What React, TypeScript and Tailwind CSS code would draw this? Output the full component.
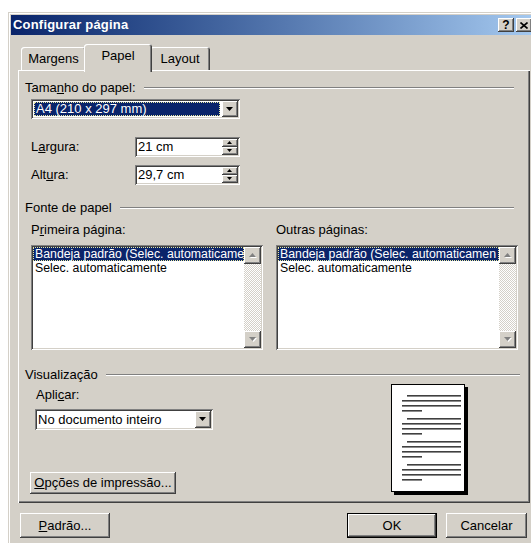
import React from "react";

type Kids = { children?: React.ReactNode; className?: string };

// Classic 3D frames
const RAISED =
  "bg-[#d4d0c8] shadow-[inset_-1px_-1px_#404040,inset_1px_1px_#ffffff,inset_-2px_-2px_#808080,inset_2px_2px_#d4d0c8]";
const SUNKEN =
  "shadow-[inset_1px_1px_#808080,inset_-1px_-1px_#ffffff,inset_2px_2px_#404040,inset_-2px_-2px_#d4d0c8]";

function Tri({ dir, size = 7, disabled = false }: { dir: "up" | "down"; size?: number; disabled?: boolean }) {
  const h = Math.ceil(size / 2);
  const pts =
    dir === "down" ? `0,0 ${size},0 ${size / 2},${h}` : `0,${h} ${size},${h} ${size / 2},0`;
  return (
    <svg width={size + 1} height={h + 1} viewBox={`0 0 ${size + 1} ${h + 1}`} className="block">
      {disabled && <polygon points={pts} fill="#ffffff" transform="translate(1,1)" />}
      <polygon points={pts} fill={disabled ? "#808080" : "#000000"} />
    </svg>
  );
}

function Btn({ children, className = "" }: Kids) {
  return <div className={`flex items-center justify-center ${RAISED} ${className}`}>{children}</div>;
}

function GroupTitle({ children, lineRight }: { children: React.ReactNode; lineRight: string }) {
  return (
    <div className="flex items-center h-[16px]">
      <span className="whitespace-nowrap">{children}</span>
      <div className={`flex-1 ml-[8px] h-0 border-t border-t-[#808080] border-b border-b-white ${lineRight}`} />
    </div>
  );
}

function Spin({ value }: { value: string }) {
  return (
    <div className={`flex w-[105px] h-[20px] p-[2px] bg-white ${SUNKEN}`}>
      <div className="flex-1 flex items-center pl-[1px] leading-[14px]">{value}</div>
      <div className="w-[16px] flex flex-col">
        <Btn className="h-[8px]">
          <Tri dir="up" size={5} />
        </Btn>
        <Btn className="h-[8px]">
          <Tri dir="down" size={5} />
        </Btn>
      </div>
    </div>
  );
}

function ListBox({ width, first, second }: { width: string; first: string; second: string }) {
  return (
    <div className={`flex ${width} h-[105px] p-[2px] bg-white ${SUNKEN}`}>
      <div className="flex-1 overflow-hidden leading-[14px] whitespace-nowrap text-[12.3px]">
        <div className="bg-[#0a246a] text-white border border-dotted border-[#e8e8a0] pl-[1px] h-[14px] flex items-center">
          {first}
        </div>
        <div className="pl-[2px] h-[14px] flex items-center">{second}</div>
      </div>
      <div className="w-[17px] flex flex-col">
        <Btn className="h-[17px]">
          <Tri dir="up" disabled />
        </Btn>
        <div className="flex-1 bg-[image:repeating-conic-gradient(#d4d0c8_0_25%,#ffffff_0_50%)] bg-[length:2px_2px]" />
        <Btn className="h-[17px]">
          <Tri dir="down" disabled />
        </Btn>
      </div>
    </div>
  );
}

function PagePreview() {
  const groups = [11, 34, 57, 80];
  return (
    <svg width="78" height="112" viewBox="0 0 78 112" className="block">
      <rect x="3" y="3" width="74" height="108" fill="#000000" />
      <rect x="0.5" y="0.5" width="73" height="107" fill="#ffffff" stroke="#000000" />
      {groups.map((g) => (
        <g key={g} fill="#404040">
          <rect x="16" y={g} width="54" height="1.6" />
          <rect x="11" y={g + 5} width="59" height="1.6" />
          <rect x="11" y={g + 10} width="59" height="1.6" />
          <rect x="11" y={g + 15} width="20" height="1.6" />
        </g>
      ))}
    </svg>
  );
}

export default function App() {
  return (
    <div className="w-[531px] h-[543px] overflow-hidden bg-white font-['Liberation_Sans',Arial,sans-serif] text-[13px] leading-[16px] text-black">
      <div className="ml-[8px] mt-[12px] w-[532px] h-[540px] p-[3px] flex flex-col bg-[#d4d0c8] shadow-[inset_-1px_-1px_#404040,inset_1px_1px_#d4d0c8,inset_-2px_-2px_#808080,inset_2px_2px_#ffffff]">
        {/* Title bar */}
        <div className="h-[20px] flex items-center pl-[2px] pr-[5px] bg-gradient-to-r from-[#0a246a] to-[#a6caf0]">
          <span className="font-bold text-white text-[13px] tracking-[0.2px]">Configurar página</span>
          <div className="ml-auto flex gap-[2px]">
            <Btn className="w-[16px] h-[14px] font-bold text-[12px] leading-none">?</Btn>
            <Btn className="w-[16px] h-[14px]">
              <svg width="8" height="7" viewBox="0 0 8 7" className="block">
                <path d="M0.5 0.5 L7.5 6.5 M7.5 0.5 L0.5 6.5" stroke="#000" strokeWidth="1.6" />
              </svg>
            </Btn>
          </div>
        </div>

        <div className="px-[7px] flex flex-col">
          {/* Tabs */}
          <div className="relative z-10 flex items-end h-[26px] mt-[9px] pl-[3px]">
            <div className="w-[65px] h-[23px] flex items-center justify-center rounded-t-[3px] bg-[#d4d0c8] shadow-[inset_1px_1px_#ffffff,inset_-1px_0_#404040,inset_-2px_0_#808080]">
              Margens
            </div>
            <div className="w-[68px] h-[28px] -mb-[2px] -mx-[2px] relative z-10 pb-[4px] flex items-center justify-center rounded-t-[3px] bg-[#d4d0c8] shadow-[inset_1px_1px_#ffffff,inset_-1px_0_#404040,inset_-2px_0_#808080]">
              Papel
            </div>
            <div className="w-[60px] h-[23px] flex items-center justify-center rounded-t-[3px] bg-[#d4d0c8] shadow-[inset_1px_1px_#ffffff,inset_-1px_0_#404040,inset_-2px_0_#808080]">
              Layout
            </div>
          </div>

          {/* Tab page */}
          <div className="h-[433px] flex flex-col pl-[7px] pt-[10px] shadow-[inset_1px_1px_#ffffff,inset_-1px_-1px_#404040,inset_-2px_-2px_#808080]">
            <GroupTitle lineRight="mr-[16px]">
              Tama<u>n</u>ho do papel:
            </GroupTitle>

            <div className={`ml-[6px] mt-[3px] w-[209px] h-[20px] p-[2px] flex bg-white ${SUNKEN}`}>
              <div className="flex-1 p-[1px] pr-[2px]">
                <div className="h-full bg-[#0a246a] text-white border border-dotted border-[#e8e8a0] flex items-center pl-[1px] leading-[14px]">
                  A4 (210 x 297 mm)
                </div>
              </div>
              <Btn className="w-[16px] h-full">
                <Tri dir="down" />
              </Btn>
            </div>

            <div className="flex items-center ml-[6px] mt-[18px]">
              <span className="w-[104px]">
                L<u>a</u>rgura:
              </span>
              <Spin value="21 cm" />
            </div>
            <div className="flex items-center ml-[6px] mt-[8px]">
              <span className="w-[104px]">
                Alt<u>u</u>ra:
              </span>
              <Spin value="29,7 cm" />
            </div>

            <div className="mt-[15px]">
              <GroupTitle lineRight="mr-[16px]">Fonte de papel</GroupTitle>
            </div>

            <div className="flex ml-[6px] mt-[6px]">
              <div className="w-[245px]">
                P<u>r</u>imeira página:
              </div>
              <div>Outras páginas:</div>
            </div>

            <div className="flex ml-[6px] mt-[7px] gap-[13px]">
              <ListBox width="w-[232px]" first="Bandeja padrão (Selec. automaticame" second="Selec. automaticamente" />
              <ListBox width="w-[242px]" first="Bandeja padrão (Selec. automaticamen" second="Selec. automaticamente" />
            </div>

            <div className="mt-[17px]">
              <GroupTitle lineRight="mr-[10px]">Visualização</GroupTitle>
            </div>

            <div className="flex">
              <div className="w-[200px] flex flex-col pl-[11px]">
                <div className="mt-[4px]">
                  Apli<u>c</u>ar:
                </div>
                <div className={`-ml-[1px] mt-[6px] w-[178px] h-[21px] p-[2px] flex bg-white ${SUNKEN}`}>
                  <div className="flex-1 flex items-center pl-[1px] leading-[14px]">No documento inteiro</div>
                  <Btn className="w-[16px] h-full">
                    <Tri dir="down" />
                  </Btn>
                </div>
                <Btn className="-ml-[6px] mt-[42px] w-[146px] h-[22px]">
                  <span>
                    <u>O</u>pções de impressão...
                  </span>
                </Btn>
              </div>
              <div className="ml-[166px] mt-[1px]">
                <PagePreview />
              </div>
            </div>
          </div>

          {/* Dialog buttons */}
          <div className="flex mt-[10px]">
            <Btn className="ml-[2px] w-[90px] h-[25px]">
              <span>
                <u>P</u>adrão...
              </span>
            </Btn>
            <div className="ml-auto w-[90px] h-[25px] border border-black">
              <Btn className="w-full h-full">OK</Btn>
            </div>
            <Btn className="ml-[9px] mr-[3px] w-[81px] h-[25px]">Cancelar</Btn>
          </div>
        </div>
      </div>
    </div>
  );
}
